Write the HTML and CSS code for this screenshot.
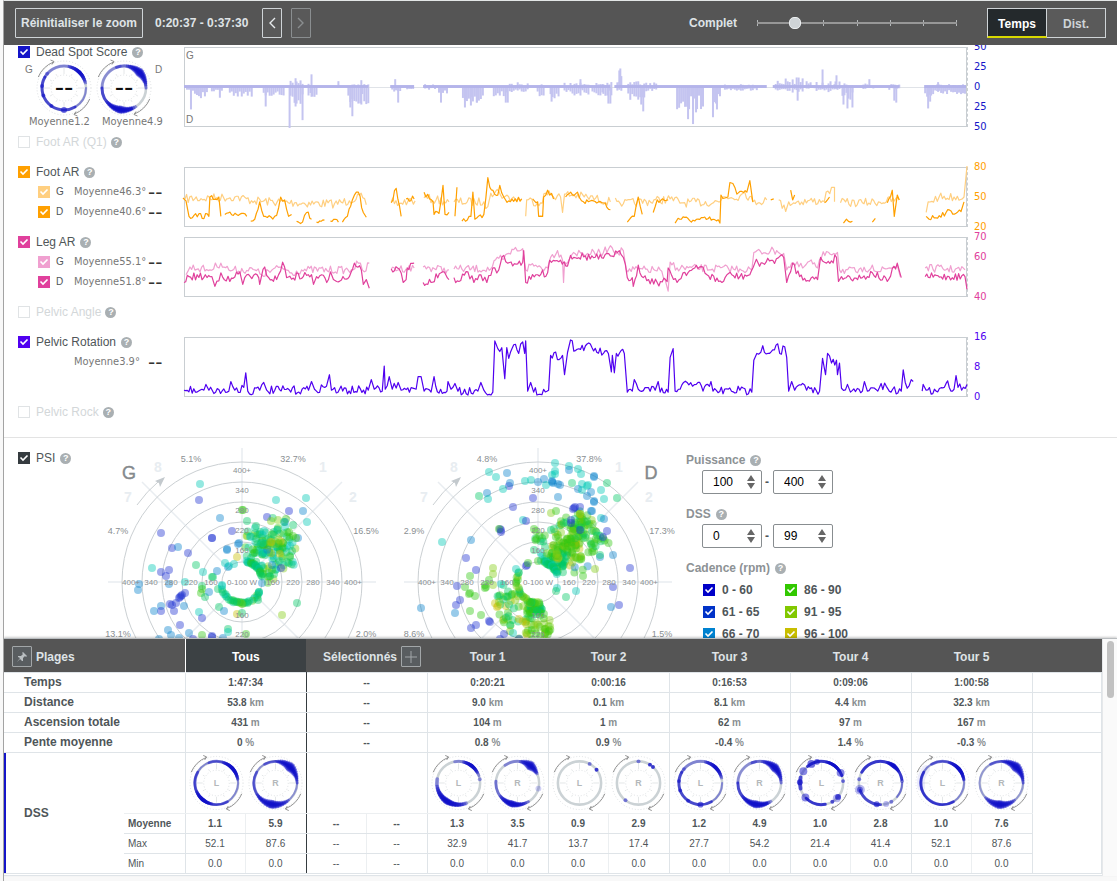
FILE: index.html
```html
<!DOCTYPE html>
<html lang="fr">
<head>
  <meta charset="UTF-8" />
  <meta name="viewport" content="width=device-width, initial-scale=1" />
  <title>Analyse de l'activité</title>
  <link rel="stylesheet" href="styles.css">
</head>
<body>
  <div class="app">
    <header class="toolbar">
      <button type="button" class="btn reset">Réinitialiser le zoom</button>
      <span class="range-text">0:20:37 - 0:37:30</span>
      <button type="button" class="btn arrow" aria-label="Précédent">
        <svg width="8" height="12" viewBox="0 0 8 12"><path d="M7 1 L2 6 L7 11" /></svg>
      </button>
      <button type="button" class="btn arrow next" aria-label="Suivant" disabled>
        <svg width="8" height="12" viewBox="0 0 8 12"><path d="M1 1 L6 6 L1 11" /></svg>
      </button>
      <label class="zoom-label" for="zoom">Complet</label>
      <input class="zoom" type="range" id="zoom" min="0" max="100" value="17" />
      <div class="segmented">
        <button type="button" class="segment active">Temps</button>
        <button type="button" class="segment">Dist.</button>
      </div>
    </header>

    <main class="content">
      <section class="metrics">
        <div class="metric dss">
          <div class="legend">
            <div class="title">
              <input type="checkbox" class="check blue" id="mDss" checked />
              <label for="mDss">Dead Spot Score</label><span class="help">?</span>
            </div>
            <div class="wheels">
              <span class="side">G</span>
              <svg class="wheel" data-wheel="t3l" data-label="--"></svg>
              <svg class="wheel" data-wheel="t3r" data-label="--"></svg>
              <span class="side">D</span>
            </div>
            <div class="wheel-avg"><span>Moyenne<b>1.2</b></span><span>Moyenne<b>4.9</b></span></div>
          </div>
          <div class="plot">
            <svg id="dssChart" viewBox="0 0 784 80" preserveAspectRatio="none"></svg>
            <span class="plot-side top">G</span>
            <span class="plot-side bottom">D</span>
          </div>
          <div class="axis blue-text"><span>50</span><span>25</span><span>0</span><span>25</span><span>50</span></div>
        </div>

        <div class="metric off">
          <div class="title">
            <input type="checkbox" class="check" id="mFootQ1" />
            <label for="mFootQ1">Foot AR (Q1)</label><span class="help">?</span>
          </div>
        </div>

        <div class="metric">
          <div class="legend">
            <div class="title">
              <input type="checkbox" class="check orange" id="mFoot" checked />
              <label for="mFoot">Foot AR</label><span class="help">?</span>
            </div>
            <div class="sub">
              <input type="checkbox" class="check orange-light" id="mFootG" checked />
              <label for="mFootG">G</label><span class="avg">Moyenne<b>46.3°</b></span><span class="dash">--</span>
            </div>
            <div class="sub">
              <input type="checkbox" class="check orange" id="mFootD" checked />
              <label for="mFootD">D</label><span class="avg">Moyenne<b>40.6°</b></span><span class="dash">--</span>
            </div>
          </div>
          <div class="plot"><svg id="footChart" viewBox="0 0 784 60" preserveAspectRatio="none"></svg></div>
          <div class="axis orange-text"><span>80</span><span>50</span><span>20</span></div>
        </div>

        <div class="metric">
          <div class="legend">
            <div class="title">
              <input type="checkbox" class="check pink" id="mLeg" checked />
              <label for="mLeg">Leg AR</label><span class="help">?</span>
            </div>
            <div class="sub">
              <input type="checkbox" class="check pink-light" id="mLegG" checked />
              <label for="mLegG">G</label><span class="avg">Moyenne<b>55.1°</b></span><span class="dash">--</span>
            </div>
            <div class="sub">
              <input type="checkbox" class="check pink" id="mLegD" checked />
              <label for="mLegD">D</label><span class="avg">Moyenne<b>51.8°</b></span><span class="dash">--</span>
            </div>
          </div>
          <div class="plot"><svg id="legChart" viewBox="0 0 784 60" preserveAspectRatio="none"></svg></div>
          <div class="axis pink-text"><span>70</span><span>60</span><span></span><span>40</span></div>
        </div>

        <div class="metric off">
          <div class="title">
            <input type="checkbox" class="check" id="mAngle" />
            <label for="mAngle">Pelvic Angle</label><span class="help">?</span>
          </div>
        </div>

        <div class="metric">
          <div class="legend">
            <div class="title">
              <input type="checkbox" class="check violet" id="mRotation" checked />
              <label for="mRotation">Pelvic Rotation</label><span class="help">?</span>
            </div>
            <div class="sub">
              <span></span><span></span><span class="avg">Moyenne<b>3.9°</b></span><span class="dash">--</span>
            </div>
          </div>
          <div class="plot"><svg id="rotationChart" viewBox="0 0 784 60" preserveAspectRatio="none"></svg></div>
          <div class="axis violet-text"><span>16</span><span>8</span><span>0</span></div>
        </div>

        <div class="metric off">
          <div class="title">
            <input type="checkbox" class="check" id="mRock" />
            <label for="mRock">Pelvic Rock</label><span class="help">?</span>
          </div>
        </div>
      </section>

      <section class="psi">
        <div class="title">
          <input type="checkbox" class="check dark" id="mPsi" checked />
          <label for="mPsi">PSI</label><span class="help">?</span>
        </div>
        <svg class="polar" id="psiLeft" viewBox="-148 -144 296 296"></svg>
        <svg class="polar" id="psiRight" viewBox="-148 -144 296 296"></svg>
        <div class="filters">
          <h3>Puissance <span class="help">?</span></h3>
          <div class="pair">
            <input type="number" aria-label="Puissance min" value="100" /><span>-</span><input type="number" aria-label="Puissance max" value="400" />
          </div>
          <h3>DSS <span class="help">?</span></h3>
          <div class="pair">
            <input type="number" aria-label="DSS min" value="0" /><span>-</span><input type="number" aria-label="DSS max" value="99" />
          </div>
          <h3>Cadence (rpm) <span class="help">?</span></h3>
          <div class="cadence">
            <label><input type="checkbox" class="check c60" checked />0 - 60</label>
            <label><input type="checkbox" class="check c90" checked />86 - 90</label>
            <label><input type="checkbox" class="check c65" checked />61 - 65</label>
            <label><input type="checkbox" class="check c95" checked />91 - 95</label>
            <label><input type="checkbox" class="check c70" checked />66 - 70</label>
            <label><input type="checkbox" class="check c100" checked />96 - 100</label>
          </div>
        </div>
      </section>
    </main>

    <section class="ranges">
      <table>
        <colgroup>
          <col class="col-name"><col class="col-sub">
          <col class="a"><col class="b"><col class="a"><col class="b"><col class="a"><col class="b"><col class="a"><col class="b">
          <col class="a"><col class="b"><col class="a"><col class="b"><col class="a"><col class="b"><col>
        </colgroup>
        <thead>
          <tr>
            <th colspan="2" class="head-name">
              <div class="head-flex">
                <button type="button" class="pin" aria-label="Épingler">
                  <svg width="12" height="12" viewBox="0 0 12 12"><path d="M7 1 L11 5 L10 6 L9 5 L7 7 L7 10 L6 10 L4 8 L1 11 L4 7 L2 6 L2 5 L5 5 L7 3 L6 2 Z" /></svg>
                </button>
                <span>Plages</span>
              </div>
            </th>
            <th colspan="2" class="all">Tous</th>
            <th colspan="2">
              <div class="head-flex selected">
                <span>Sélectionnés</span>
                <button type="button" class="add" aria-label="Ajouter">
                  <svg width="12" height="12" viewBox="0 0 12 12"><path d="M6 0 V12 M0 6 H12" /></svg>
                </button>
              </div>
            </th>
            <th colspan="2">Tour 1</th>
            <th colspan="2">Tour 2</th>
            <th colspan="2">Tour 3</th>
            <th colspan="2">Tour 4</th>
            <th colspan="2">Tour 5</th>
            <th></th>
          </tr>
        </thead>
        <tbody>
          <tr>
            <th colspan="2">Temps</th>
            <td colspan="2" class="all">1:47:34</td><td colspan="2">--</td><td colspan="2">0:20:21</td><td colspan="2">0:00:16</td>
            <td colspan="2">0:16:53</td><td colspan="2">0:09:06</td><td colspan="2">1:00:58</td><td></td>
          </tr>
          <tr>
            <th colspan="2">Distance</th>
            <td colspan="2" class="all">53.8 <i>km</i></td><td colspan="2">--</td><td colspan="2">9.0 <i>km</i></td><td colspan="2">0.1 <i>km</i></td>
            <td colspan="2">8.1 <i>km</i></td><td colspan="2">4.4 <i>km</i></td><td colspan="2">32.3 <i>km</i></td><td></td>
          </tr>
          <tr>
            <th colspan="2">Ascension totale</th>
            <td colspan="2" class="all">431 <i>m</i></td><td colspan="2">--</td><td colspan="2">104 <i>m</i></td><td colspan="2">1 <i>m</i></td>
            <td colspan="2">62 <i>m</i></td><td colspan="2">97 <i>m</i></td><td colspan="2">167 <i>m</i></td><td></td>
          </tr>
          <tr>
            <th colspan="2">Pente moyenne</th>
            <td colspan="2" class="all">0 <i>%</i></td><td colspan="2">--</td><td colspan="2">0.8 <i>%</i></td><td colspan="2">0.9 <i>%</i></td>
            <td colspan="2">-0.4 <i>%</i></td><td colspan="2">1.4 <i>%</i></td><td colspan="2">-0.3 <i>%</i></td><td></td>
          </tr>
          <tr class="wheel-row">
            <th rowspan="4" class="dss-name">DSS</th>
            <td class="sub-name"></td>
            <td colspan="2" class="all"><div class="wheel-pair"><svg class="wheel" data-wheel="alll" data-label="L"></svg><svg class="wheel" data-wheel="allr" data-label="R"></svg></div></td>
            <td colspan="2"></td>
            <td colspan="2"><div class="wheel-pair"><svg class="wheel" data-wheel="t1l" data-label="L"></svg><svg class="wheel" data-wheel="t1r" data-label="R"></svg></div></td>
            <td colspan="2"><div class="wheel-pair"><svg class="wheel" data-wheel="t2l" data-label="L"></svg><svg class="wheel" data-wheel="t2r" data-label="R"></svg></div></td>
            <td colspan="2"><div class="wheel-pair"><svg class="wheel" data-wheel="t3l" data-label="L"></svg><svg class="wheel" data-wheel="t3r" data-label="R"></svg></div></td>
            <td colspan="2"><div class="wheel-pair"><svg class="wheel" data-wheel="t4l" data-label="L"></svg><svg class="wheel" data-wheel="t4r" data-label="R"></svg></div></td>
            <td colspan="2"><div class="wheel-pair"><svg class="wheel" data-wheel="t5l" data-label="L"></svg><svg class="wheel" data-wheel="t5r" data-label="R"></svg></div></td>
            <td rowspan="4"></td>
          </tr>
          <tr class="half">
            <th class="sub-name">Moyenne</th>
            <td class="all-left">1.1</td><td class="all-right">5.9</td><td>--</td><td>--</td><td>1.3</td><td>3.5</td><td>0.9</td><td>2.9</td>
            <td>1.2</td><td>4.9</td><td>1.0</td><td>2.8</td><td>1.0</td><td>7.6</td>
          </tr>
          <tr class="half light">
            <th class="sub-name">Max</th>
            <td class="all-left">52.1</td><td class="all-right">87.6</td><td>--</td><td>--</td><td>32.9</td><td>41.7</td><td>13.7</td><td>17.4</td>
            <td>27.7</td><td>54.2</td><td>21.4</td><td>41.4</td><td>52.1</td><td>87.6</td>
          </tr>
          <tr class="half light">
            <th class="sub-name">Min</th>
            <td class="all-left">0.0</td><td class="all-right">0.0</td><td>--</td><td>--</td><td>0.0</td><td>0.0</td><td>0.0</td><td>0.0</td>
            <td>0.0</td><td>0.0</td><td>0.0</td><td>0.0</td><td>0.0</td><td>0.0</td>
          </tr>
        </tbody>
      </table>
      <div class="scrollbar"><div class="thumb"></div></div>
    </section>
  </div>

  <script src="charts.js"></script>
</body>
</html>
```

FILE: styles.css
```css
* {
  box-sizing: border-box;
}
body {
  margin: 0;
  background: #f8f8f8;
  color: #4f5659;
  font: 12px/20px "Liberation Sans", Arial, sans-serif;
}
button, input {
  font-family: inherit;
  margin: 0;
}
svg {
  display: block;
}
.app {
  display: flex;
  flex-direction: column;
  height: 100vh;
  margin-left: 3px;
  padding-bottom: 5px;
  border-left: 1px solid #a3a3a3;
  border-top: 1px solid #e3e6e6;
  overflow: hidden;
}

/* toolbar */
.toolbar {
  display: flex;
  align-items: center;
  flex: none;
  height: 44px;
  padding: 0 11px;
  background: #555;
  color: #dfe3e6;
  font-weight: bold;
  position: relative;
  z-index: 1;
}
.btn {
  height: 30px;
  padding: 0;
  border: 1px solid #cfd4d7;
  border-radius: 1px;
  background: #595959;
  color: #dfe3e6;
  font-size: 12px;
  font-weight: bold;
}
.reset {
  width: 128px;
}
.range-text {
  margin: 0 14px 0 12px;
}
.arrow {
  display: flex;
  align-items: center;
  justify-content: center;
  width: 20px;
}
.arrow path {
  fill: none;
  stroke: #e6eaec;
  stroke-width: 1.4;
}
.next {
  margin-left: 9px;
  border-color: #8a8e90;
}
.next path {
  stroke: #8a8e90;
}
.zoom-label {
  margin-left: auto;
  margin-right: 20px;
}
.zoom {
  appearance: none;
  width: 200px;
  height: 20px;
  margin-right: 30px;
  background:
    linear-gradient(#979797, #979797) center / 100% 2px no-repeat,
    repeating-linear-gradient(90deg, #b4b8ba 0 1px, transparent 1px calc(199px / 6)) center / 100% 6px no-repeat;
}
.zoom::-webkit-slider-thumb {
  appearance: none;
  width: 12px;
  height: 12px;
  border-radius: 5px;
  border: 1px solid #eceff1;
  background: #cfd4d7;
}
.segmented {
  display: flex;
}
.segment {
  width: 59px;
  height: 30px;
  padding: 2px 0 0;
  border: 1px solid #cfd4d7;
  border-left: 0;
  background: #5a5a5a;
  color: #cfd4d7;
  font-size: 12px;
  font-weight: bold;
}
.segment.active {
  width: 60px;
  border-left: 1px solid #cfd4d7;
  border-bottom: 2px solid #d8d800;
  background: #24292c;
  color: #fff;
}

/* metric rows */
.content {
  flex: 1;
  min-height: 0;
  overflow: hidden;
  background: #fff;
}
.metrics {
  margin-top: -3px;
  padding-bottom: 5px;
  border-bottom: 1px solid #e3e3e3;
}
.metric {
  display: grid;
  grid-template-columns: 179px 1fr 149px;
  height: 70px;
}
.metric.dss {
  height: 90px;
}
.metric.off {
  height: 30px;
  color: #d3d7d9;
}
.title {
  display: flex;
  align-items: center;
  height: 20px;
  padding-left: 14px;
}
.title .check {
  margin-right: 6px;
}
.help {
  display: inline-flex;
  align-items: center;
  justify-content: center;
  width: 11px;
  height: 11px;
  margin-left: 5px;
  border-radius: 50%;
  background: #a9afb2;
  color: #fff;
  font-size: 9px;
  font-weight: bold;
  line-height: 11px;
}
.off .help {
  margin-left: 4px;
}
.check {
  appearance: none;
  flex: none;
  width: 12px;
  height: 12px;
  border: 1px solid #e0e3e5;
  background: #fff center no-repeat;
}
.check:checked {
  border: 0;
  background-image: url("data:image/svg+xml,%3Csvg xmlns='http://www.w3.org/2000/svg' width='12' height='12'%3E%3Cpath d='M2.5 5.5 L5 8 L9.5 3.5' fill='none' stroke='white' stroke-width='1.6'/%3E%3C/svg%3E");
}
.blue { background-color: #1414c8; }
.orange { background-color: #ffa000; }
.orange-light { background-color: #ffcf80; }
.pink { background-color: #e0409c; }
.pink-light { background-color: #f0a0d0; }
.violet { background-color: #5000f0; }
.dark { background-color: #353b3f; }
.c60 { background-color: #0000c8; }
.c65 { background-color: #0032c8; }
.c70 { background-color: #0082d0; }
.c90 { background-color: #32c800; }
.c95 { background-color: #82c800; }
.c100 { background-color: #c8be00; }

.sub {
  display: grid;
  grid-template-columns: 18px 18px 74px auto;
  align-items: center;
  height: 20px;
  padding-left: 34px;
  font-size: 10px;
}
.avg, .wheel-avg, .axis {
  font-family: "DejaVu Sans Condensed", "Noto Sans", sans-serif;
  font-size: 11px;
}
.avg, .wheel-avg {
  color: #777;
}
.avg b, .wheel-avg b {
  font-weight: normal;
}
.dash {
  color: #333;
  font: 20px/20px "DejaVu Sans", sans-serif;
}
.wheels {
  display: flex;
  height: 60px;
  margin-top: -4px;
  padding-left: 21px;
}
.side {
  width: 9px;
  padding-top: 2px;
  color: #777;
  font-size: 10px;
}
.wheels .side:last-child {
  margin-left: 1px;
}
.wheel-avg {
  display: flex;
  gap: 12px;
  margin-top: -4px;
  padding-left: 25px;
  line-height: 16px;
}
.wheel {
  width: 60px;
  height: 60px;
}
.plot {
  position: relative;
  height: 60px;
  margin-top: 5px;
  padding-left: 1px;
  border-right: 1px dashed #c9ced2;
}
.dss .plot {
  height: 80px;
}
.plot svg {
  width: 100%;
  height: 100%;
  border: 1px solid #c9ced2;
  overflow: visible;
}
.plot path {
  fill: none;
  stroke-width: 1.2;
  stroke-linejoin: round;
  vector-effect: non-scaling-stroke;
}
.plot-side {
  position: absolute;
  left: 3px;
  color: #777;
  font-size: 10px;
  line-height: 14px;
}
.plot-side.top {
  top: 2px;
}
.plot-side.bottom {
  bottom: 0;
}
.axis {
  display: flex;
  flex-direction: column;
  justify-content: space-between;
  height: 80px;
  margin-top: -5px;
  padding-left: 6px;
}
.dss .axis {
  height: 100px;
}
.axis span {
  height: 20px;
}
.blue-text { color: #1414c8; }
.orange-text { color: #ffa000; }
.pink-text { color: #e0409c; }
.violet-text { color: #5000f0; }

/* polar charts */
.psi {
  display: grid;
  grid-template-columns: 90px 296px 296px 1fr;
}
.psi > .title {
  margin-top: 10px;
}
.polar {
  width: 296px;
  height: 296px;
}
.polar text {
  text-anchor: middle;
  font-size: 8px;
  fill: #8a8f92;
}
.polar .percent {
  font-size: 9px;
}
.polar .sector {
  font-size: 14px;
  font-weight: bold;
  fill: #e8edf1;
}
.polar .big {
  font-size: 18px;
  fill: #84898c;
  stroke: #84898c;
  stroke-width: 0.4;
}
.filters {
  padding-top: 12px;
  font-weight: bold;
}
.filters h3 {
  display: flex;
  align-items: center;
  height: 20px;
  margin: 0;
  color: #8d9295;
  font-size: 12px;
}
.pair {
  display: flex;
  gap: 3px;
  height: 24px;
  margin: 0 0 10px 16px;
  line-height: 24px;
}
.pair span {
  width: 5px;
}
.pair input {
  appearance: textfield;
  width: 60px;
  height: 24px;
  padding: 0 0 0 10px;
  border: 1px solid #888d90;
  border-radius: 2px;
  background: #fff url("data:image/svg+xml,%3Csvg xmlns='http://www.w3.org/2000/svg' width='8' height='14'%3E%3Cpath d='M0 6 L4 0 L8 6 Z M0 8 L8 8 L4 14 Z' fill='%23666'/%3E%3C/svg%3E") right 6px center no-repeat;
  color: #000;
  font-size: 12px;
}
.pair input::-webkit-inner-spin-button {
  appearance: none;
}
.cadence {
  display: grid;
  grid-template-columns: 82px 100px;
  margin: 1px 0 0 17px;
}
.cadence label {
  display: flex;
  align-items: center;
  gap: 7px;
  height: 22px;
}

/* ranges table */
.ranges {
  display: flex;
  flex: none;
  position: relative;
  border-top: 1px solid #b9bdc0;
  box-shadow: 0 -1px 2px rgba(0, 0, 0, 0.2);
  background: #fafafa;
}
.ranges table {
  flex: 1;
  width: 100%;
  border-collapse: collapse;
  table-layout: fixed;
  background: #fff;
  border-bottom: 3px double #dfe4e8;
}
.col-name { width: 120px; }
.col-sub { width: 61px; }
.a { width: 60px; }
.b { width: 61px; }
.ranges thead th {
  height: 34px;
  padding-top: 3px;
  border: 0;
  background: #555;
  color: #dfe3e6;
  font-size: 12px;
  text-align: center;
}
.ranges thead .all {
  border-left: 1px solid #fff;
  background: #3c4144;
  color: #fff;
}
.head-flex {
  display: flex;
  align-items: center;
  gap: 4px;
  padding-left: 8px;
}
.head-flex.selected {
  padding-left: 17px;
}
.pin, .add {
  display: flex;
  align-items: center;
  justify-content: center;
  width: 20px;
  height: 21px;
  padding: 0;
  border: 1px solid #a2a6a8;
  border-radius: 1px;
  background: #595d60;
}
.pin path {
  fill: #b9bec1;
}
.add path {
  fill: none;
  stroke: #a2a6a8;
}
.ranges th, .ranges td {
  padding: 0;
}
.ranges tbody th, .ranges tbody td {
  height: 20px;
  border: 1px solid #dfe4e8;
  line-height: 19px;
}
.ranges tbody th {
  padding-left: 20px;
  border-left: 0;
  text-align: left;
}
.ranges td {
  font-size: 10px;
  font-weight: bold;
  text-align: center;
}
.ranges i {
  color: #8a8f92;
  font-style: normal;
}
.ranges tbody .all {
  border-left: 1px solid #353b3f;
  border-right: 1px solid #353b3f;
}
.ranges tbody .dss-name {
  border-right: 0;
  background: linear-gradient(#1414c8, #1414c8) left / 2px 100% no-repeat;
}
.ranges .wheel-row td {
  height: 61px;
  border-bottom-color: #eceff1;
}
.ranges tbody td.sub-name {
  border-left: 0;
}
.ranges tbody th.sub-name {
  padding-left: 4px;
  border-left: 0;
  font-size: 10px;
}
.half td:nth-child(even) {
  border-right-color: #eceff1;
}
.ranges .half .all-left {
  border-left: 1px solid #353b3f;
}
.ranges .half .all-right {
  border-right: 1px solid #353b3f;
}
.ranges .light td, .ranges .light th {
  font-weight: normal;
}
.wheel-pair {
  display: flex;
  justify-content: center;
}
.wheel-pair .wheel {
  width: 59px;
}
.scrollbar {
  width: 15px;
  padding: 2px 3px 0 4px;
  border-left: 1px solid #e6e8ea;
}
.thumb {
  height: 57px;
  border-radius: 4px;
  background: #c1c1c1;
}
```

FILE: charts.js
```js
const NS = 'http://www.w3.org/2000/svg';
let seed = 7;

function rand() {
  seed = (seed * 16807) % 2147483647;
  return seed / 2147483647;
}

function add(parent, name, attrs, text) {
  const el = document.createElementNS(NS, name);
  for (const key in attrs) el.setAttribute(key, attrs[key]);
  if (text) el.textContent = text;
  parent.appendChild(el);
  return el;
}

// "x,y x,y | x,y ..." : each | starts a new piece of the line
function line(id, color, noise, data) {
  let d = '';
  data.split('|').forEach(piece => {
    const pts = piece.trim().split(/\s+/).map(p => p.split(',').map(Number));
    d += `M${pts[0]}`;
    for (let i = 1; i < pts.length; i++) {
      const [x0, y0] = pts[i - 1];
      const [x1, y1] = pts[i];
      const n = Math.floor((x1 - x0) / 1.6);
      for (let k = 1; k < n; k++) {
        const y = y0 + (y1 - y0) * k / n + (rand() - 0.5) * noise;
        d += `L${(x0 + (x1 - x0) * k / n).toFixed(1)},${Math.min(y, 59).toFixed(1)}`;
      }
      d += `L${x1},${y1}`;
    }
  });
  add(document.getElementById(id), 'path', { d, stroke: color });
}

line('footChart', '#ffcf80', 9, `0,32 50,30 70,34 110,36 150,37 165,34 175,28 182,38 | 207,35 215,37 224,34 231,34 | 240,31 252,33 265,35 |
  270,35 300,35 304,40 307,26 315,24 320,30 338,32 | 342,50 343,33 357,36 362,26 377,30 379,46 381,27 404,30 427,35 |
  432,31 440,37 487,32 500,36 537,35 540,30 557,29 562,25 570,35 584,33 | 596,33 603,45 606,35 640,34 649,20 652,20 652,35 |
  658,36 680,36 717,33 | 744,46 746,35 757,30 782,30 785,-2`);
line('footChart', '#ffa000', 6, `-2,31 1,34 4,50 9,49 24,50 25,30 34,30 36,50 | 40,48 62,50 | 66,55 70,53 75,35 79,50 90,50 92,49 96,30 100,33 104,50 107,48 |
  112,55 118,56 122,46 127,53 | 132,56 140,54 | 146,55 154,56 | 158,56 163,50 168,33 174,25 179,46 182,51 | 207,36 212,21 217,50 | 222,32 230,32 |
  240,25 249,35 250,48 255,47 259,18 261,48 265,46 | 271,50 273,20 | 278,55 287,50 289,25 291,53 300,48 304,10 306,20 314,28 316,18 320,30 325,34 338,32 |
  349,32 354,35 355,50 359,50 360,30 364,23 370,32 | 382,30 394,25 400,35 410,34 420,36 427,43 | 444,56 447,52 451,50 455,30 459,48 | 470,46 474,33 485,33 |
  492,57 495,52 510,54 530,53 537,57 538,28 542,31 545,30 547,15 550,16 554,27 564,25 567,13 570,35 | 588,33 591,32 | 608,23 610,33 612,28 |
  642,36 647,30 | 661,57 664,53 670,55 | 690,56 693,52 | 705,36 710,23 712,50 715,28 717,33 | 744,50 747,53 764,46 779,45 782,35`);
line('legChart', '#f0a0d0', 8, `1,38 5,30 25,33 36,26 44,33 70,33 77,38 97,30 107,36 117,33 167,33 174,26 180,35 185,26 | 207,32 230,31 | 239,30 265,33 |
  270,32 307,32 315,21 320,22 330,12 339,11 342,33 347,28 364,31 367,20 374,13 379,23 380,46 381,25 390,15 404,16 420,15 427,8 434,15 440,13 443,33 477,33
  485,55 487,25 494,31 557,32 569,33 571,15 594,13 601,16 604,33 609,26 620,31 627,24 635,31 639,20 644,14 655,15 657,33 680,35 690,28 695,35 715,28 718,40 | 743,31 783,33`);
line('legChart', '#e0409c', 8, `-1,46 4,40 27,40 30,50 36,36 45,45 55,35 58,48 62,38 74,41 75,48 80,30 84,41 92,43 98,25 102,41 127,38 129,48 132,40 144,43 146,35 149,43 165,40
  170,26 177,33 179,48 182,43 185,52 | 207,32 215,32 219,46 222,43 223,31 230,26 | 239,46 247,46 257,36 265,43 | 270,41 275,45 284,35 290,46 297,38 303,46 309,31 315,33
  320,18 324,26 339,25 340,13 342,46 354,38 364,36 366,23 377,23 384,29 387,18 420,21 434,15 440,20 444,41 449,41 450,50 455,28 460,41 474,46 484,45 485,31 494,46 500,36
  520,30 524,38 539,46 544,38 557,40 567,38 572,26 580,26 590,23 601,20 604,46 610,26 617,40 635,43 638,20 644,26 654,20 656,45 659,40 680,41 690,36 705,45 715,26 719,41 |
  743,40 783,40 785,53`);
line('rotationChart', '#5000f0', 9, `-1,54 17,53 21,48 24,54 44,55 46,45 50,54 59,51 61,36 63,55 75,54 79,46 82,54 124,54 127,45 130,53 142,50 145,38 147,54 184,54 187,43 190,53
  198,55 200,29 201,53 205,40 208,53 214,46 217,54 232,53 234,40 237,40 240,55 247,56 250,40 255,57 263,55 264,45 267,53 271,47 274,55 294,55 297,46 300,54 309,56 311,3
  314,11 318,10 321,42 323,10 325,21 330,7 335,16 339,4 341,16 342,3 344,55 347,46 350,56 365,54 367,18 379,18 381,38 384,15 387,2 392,13 402,8 420,16 425,16 428,35 429,18
  431,36 433,16 441,16 444,56 449,55 451,43 455,53 472,54 475,45 477,56 485,56 487,20 490,11 492,55 497,53 504,46 515,46 520,55 528,45 530,55 557,54 569,56 571,23 574,16
  580,8 585,16 595,6 597,16 602,9 604,20 606,55 609,45 612,54 620,47 624,54 637,55 640,21 643,38 645,16 649,26 654,23 655,38 657,26 659,52 665,48 668,56 680,55 682,45
  685,55 704,50 707,55 719,55 721,33 723,46 725,52 729,43 731,45 | 740,55 741,48 744,54 754,55 764,47 772,53 774,39 776,51 785,48`);

// dead spot bars: [from, to, up, down] fills a stretch, [x, up, down] is a single spike
const bars = document.getElementById('dssChart');
const base = 40;
function bar(x, up, down) {
  add(bars, 'rect', { x, y: base - up, width: 2, height: up + down, fill: '#c4c4f0' });
}
[[1, 8, 2, 5], [9, 22, 1, 14], [26, 37, 1, 5], [44, 68, 2, 10], [78, 100, 2, 10], [105, 119, 8, 18], [123, 132, 4, 11], [163, 184, 3, 18],
 [207, 216, 1, 6], [222, 230, 1, 3], [240, 252, 3, 3], [254, 264, 1, 8], [278, 300, 1, 16], [309, 322, 1, 10], [325, 344, 5, 6], [353, 361, 4, 10],
 [366, 376, 1, 12], [380, 405, 5, 9], [408, 419, 11, 10], [419, 428, 6, 10], [433, 438, 12, 6], [444, 462, 6, 14], [462, 474, 6, 5],
 [493, 521, 1, 24], [530, 538, 1, 20], [541, 575, 3, 4], [592, 607, 10, 4], [609, 620, 11, 6], [623, 632, 6, 2], [633, 652, 6, 6],
 [652, 658, 12, 4], [659, 670, 4, 14], [680, 692, 4, 2], [706, 717, 3, 3], [742, 750, 2, 16], [750, 783, 3, 8]
].forEach(([a, b, up, down]) => {
  for (let x = a; x < b; x += 2) bar(x, up * rand(), down * (0.35 + rand() * 0.65));
});
[[5, 0, 23], [34, 0, 11], [80, 0, 20], [104, 0, 42], [117, 0, 34], [110, 9, 20], [126, 13, 10], [165, 0, 21], [167, 0, 30], [153, 6, 1], [176, 7, 18],
 [210, 8, 3], [213, 1, 16], [256, 0, 16], [280, 0, 21], [286, 0, 19], [292, 0, 16], [321, 0, 16], [323, 0, 16], [367, 0, 15], [396, 8, 2], [424, 0, 17],
 [426, 0, 17], [435, 17, 1], [436, 19, 1], [457, 0, 18], [459, 0, 25], [504, 0, 33], [509, 0, 38], [512, 0, 26], [529, 0, 31], [533, 0, 23],
 [614, 0, 14], [639, 18, 2], [653, 12, 2], [664, 0, 22], [669, 0, 21], [660, 0, 18], [686, 8, 1], [711, 0, 14], [713, 0, 16], [745, 0, 22],
 [747, 0, 15], [755, 5, 5]
].forEach(s => bar(...s));
add(bars, 'rect', { x: 0, y: base, width: 784, height: 1, fill: '#c9ced8', opacity: 0.6 });
[[-1, 184], [206, 230], [239, 427], [431, 584], [590, 717], [742, 784]].forEach(([a, b]) => {
  add(bars, 'rect', { x: a, y: base - 2, width: b - a, height: 3, fill: '#b4b4ea' });
});

// dead spot wheels, angles in degrees clockwise from the top
function polar(r, a) {
  const t = (a - 90) * Math.PI / 180;
  return [(r * Math.cos(t)).toFixed(2), (r * Math.sin(t)).toFixed(2)];
}
function arc(r, a0, a1) {
  return `M${polar(r, a0)}A${r},${r} 0 ${a1 - a0 > 180 ? 1 : 0} 1 ${polar(r, a1)}`;
}
// arcs: [from, to, width, opacity]; bulges: [from, to, width]; dots: [angle, radius, opacity]
const wheels = {
  alll: { arcs: [[0, 359, 2, 0.4], [340, 440, 3, 0.5], [150, 300, 3, 0.6]], bulges: [[15, 80, 4], [190, 250, 4]] },
  allr: { arcs: [[0, 359, 2, 0.35], [220, 300, 3, 0.5], [330, 450, 3, 0.5]], bulges: [[0, 85, 10], [140, 240, 9]] },
  t1l: { arcs: [[350, 430, 3, 0.4], [160, 280, 4, 0.4]], bulges: [[10, 65, 4], [160, 265, 7]], dots: [[80, 2, 0.4]] },
  t1r: { arcs: [[325, 420, 3, 0.4], [150, 275, 3, 0.5]], bulges: [[5, 68, 10], [155, 235, 7]], dots: [[105, 3, 0.2]] },
  t2l: { dots: [[28, 2, 0.5], [52, 2, 0.8]] },
  t2r: { dots: [[0, 2, 0.5], [32, 2, 0.8], [42, 2, 0.8], [217, 2, 0.5]] },
  t3l: { arcs: [[150, 300, 3, 0.7], [300, 380, 3, 0.4], [90, 150, 2, 0.4]], bulges: [[10, 80, 4]], dots: [[275, 2, 0.6], [250, 2, 0.6], [215, 2, 0.6], [180, 3, 0.6], [310, 2, 0.4]] },
  t3r: { arcs: [[340, 450, 3, 0.5], [160, 270, 3, 0.7], [270, 350, 3, 0.35]], bulges: [[5, 85, 9], [145, 235, 8]] },
  t4l: { arcs: [[320, 430, 3, 0.8], [170, 225, 3, 0.8], [255, 285, 4, 0.7]], bulges: [[10, 60, 3]], dots: [[62, 4, 0.5], [130, 3, 0.7], [135, 4, 0.3], [228, 4, 0.5], [272, 3, 0.7], [303, 4, 0.5], [332, 4, 0.6], [348, 3, 0.6], [85, 2, 0.6], [150, 2, 0.7]] },
  t4r: { arcs: [[300, 440, 3, 0.8], [180, 250, 3, 0.7], [90, 130, 2, 0.5]], bulges: [[15, 60, 5]], dots: [[252, 5, 0.3], [252, 3, 0.5], [190, 3, 0.6], [165, 3, 0.3], [150, 2, 0.5], [85, 2, 0.5], [280, 2, 0.5]] },
  t5l: { arcs: [[0, 359, 2, 0.4], [150, 300, 3, 0.7], [330, 440, 3, 0.5], [260, 310, 8, 0.08]], bulges: [[15, 85, 4]] },
  t5r: { arcs: [[0, 359, 2, 0.3], [330, 450, 3, 0.5]], bulges: [[0, 85, 10], [140, 230, 9]] }
};
document.querySelectorAll('.wheel').forEach(svg => {
  const w = wheels[svg.dataset.wheel];
  svg.setAttribute('viewBox', '-30 -30 60 60');
  [27, 13].forEach(r => add(svg, 'circle', { r, fill: 'none', stroke: '#cfd3d6', 'stroke-dasharray': '1 2', 'stroke-width': 0.7 }));
  for (let a = 0; a < 360; a += 30) {
    add(svg, 'path', { d: `M${polar(14, a)}L${polar(a % 90 ? 16 : 20, a)}`, stroke: '#dde0e2', 'stroke-width': 0.8 });
  }
  add(svg, 'circle', { r: 22, fill: 'none', stroke: '#cbd2d5', 'stroke-width': 2.6 });
  const blue = add(svg, 'g', { fill: 'none', stroke: '#1010c8' });
  blue.style.filter = 'blur(0.7px)';
  (w.arcs || []).forEach(([a0, a1, width, o]) => add(blue, 'path', { d: arc(22, a0, a1), 'stroke-width': width, opacity: o, 'stroke-linecap': 'round' }));
  // nested arcs, shorter and wider towards the middle
  (w.bulges || []).forEach(([a0, a1, width]) => {
    for (let k = 0; k < 8; k++) {
      const cut = (a1 - a0) * 0.44 * k / 7;
      const sw = 3 + (width - 3) * k / 7;
      add(blue, 'path', { d: arc(22, a0 + cut, a1 - cut), 'stroke-width': sw, opacity: 0.4 });
    }
  });
  (w.dots || []).forEach(([a, r, o]) => {
    const [cx, cy] = polar(22, a);
    add(blue, 'circle', { cx, cy, r, fill: '#1010c8', stroke: 'none', opacity: o });
  });
  [0, 180].forEach(turn => {
    const g = add(svg, 'g', { transform: `rotate(${turn})`, fill: 'none', stroke: '#777', 'stroke-width': 0.8 });
    add(g, 'path', { d: arc(28, 293, 338) });
    add(g, 'path', { d: 'M-13.5,-28 L-10,-26.5 L-12,-23.5' });
  });
  const dashes = svg.dataset.label === '--';
  add(svg, 'text', {
    y: dashes ? 8 : 3, 'text-anchor': 'middle', 'font-size': dashes ? 26 : 9,
    'font-family': dashes ? 'DejaVu Sans' : 'Liberation Sans', fill: dashes ? '#111' : '#b4b8ba'
  }, svg.dataset.label);
});

// PSI polar charts
const colors = { b: '#1e32d2', s: '#0a82cd', t: '#00c8b4', m: '#00c864', g: '#32c814', l: '#82cd14', y: '#c8be00' };

function psi(id, side, sideX, percents, dots, clusters, rings) {
  const svg = document.getElementById(id);
  const grid = add(svg, 'g', { fill: 'none', stroke: '#e9edf1', 'stroke-width': 1.5 });
  add(grid, 'path', { d: 'M0,-134V140M-134,0H134M-100,-100L100,100M100,-100L-100,100' });
  [20, 40, 60, 80, 100, 120].forEach(r => add(svg, 'circle', { r, fill: r === 20 ? '#fff' : 'none', stroke: '#cbd0d3' }));
  add(svg, 'path', { d: 'M-105,-77Q-95,-91 -84,-100', fill: 'none', stroke: '#cbd0d3' });
  add(svg, 'path', { d: 'M-77,-105L-87,-101L-83,-99L-82,-95Z', fill: '#c3c9cd' });

  const layer = add(svg, 'g', {});
  const dot = (cx, cy, c) => add(layer, 'circle', { cx, cy, r: 4, fill: colors[c], 'fill-opacity': 0.42 });
  clusters.forEach(([cx, cy, spread, n, mix]) => {
    for (let i = 0; i < n; i++) {
      const x = cx + (rand() + rand() + rand() - 1.5) * spread;
      const y = cy + (rand() + rand() + rand() - 1.5) * spread;
      if (Math.hypot(x, y) > 20) dot(x.toFixed(1), y.toFixed(1), mix[Math.floor(rand() * mix.length)]);
    }
  });
  rings.forEach(([a0, a1, n, mix]) => {
    for (let i = 0; i < n; i++) {
      const [x, y] = polar(20 + rand() * 2, a0 + (a1 - a0) * (i + rand()) / n);
      dot(x, y, mix[Math.floor(rand() * mix.length)]);
    }
  });
  dots.trim().split(/\s+/).forEach(p => {
    const [c, x, y] = p.split(',');
    dot(x, y, c);
  });

  ['400+', '340', '280', '220', '160'].forEach((t, i) => {
    const r = 111 - i * 20;
    add(svg, 'text', { x: -r, y: 3 }, t);
    add(svg, 'text', { x: r, y: 3 }, t);
    add(svg, 'text', { y: -r + 2 }, t);
  });
  add(svg, 'text', { y: 36 }, '160');
  add(svg, 'text', { y: 55 }, '220');
  [['8', -84, -110], ['7', -114, -80], ['1', 81, -110], ['2', 111, -80]].forEach(([t, x, y]) => add(svg, 'text', { x, y, class: 'sector' }, t));
  [[-51, -120], [51, -120], [124, -48], [124, 55], [-124, 55], [-124, -48]].forEach(([x, y], i) => add(svg, 'text', { x, y, class: 'percent' }, percents[i]));
  add(svg, 'text', { x: sideX, y: -103, class: 'big' }, side);
  add(svg, 'text', { y: 3 }, '0-100 W');
}

psi('psiLeft', 'G', -113, ['5.1%', '32.7%', '16.5%', '2.0%', '13.1%', '4.7%'], `
  t,-42,-98 b,-43,-82 s,-22,-64 b,-81,-49 b,-30,-44 b,-30,-44 b,-10,-51 b,-70,-34 s,-64,-35 b,-54,-29 s,-15,-33 s,-15,-32 y,-5,-25 m,-46,-17
  b,-73,-12 b,-81,-10 b,-76,-6 t,-90,-14 s,-103,2 s,-104,8 s,-73,2 t,-57,0 t,-39,-10 m,-30,-5 m,-29,-5 s,-25,-11 s,-14,-15 t,-13,-16 t,-17,-19 t,-8,-18
  m,-40,4 g,-40,7 g,-41,11 m,-37,15 s,-33,10 m,-24,7 t,-20,3 t,-20,4 b,-61,14 b,-60,13 b,-62,15 b,-57,11 b,-63,16 b,-66,21 b,-72,22 b,-70,23 b,-68,29
  s,-81,24 b,-81,29 s,-88,29 s,-58,24 t,-43,30 b,-40,36 b,-62,43 s,-74,48 s,-71,53 s,-53,51 s,-63,56 s,-83,57 b,-49,57 g,-40,53 b,-30,54 b,-30,55
  m,-23,25 s,-18,29 m,-14,47 t,-14,50 y,-5,32 g,4,52 m,0,31 s,-19,56 l,40,33 m,55,21 t,17,10 m,17,10 m,16,18 s,20,1 t,34,-82 t,64,-84 b,47,-71
  s,61,-71 t,65,-60 b,25,-65 l,29,-61 l,36,-62 m,5,-61 g,0,-72 g,1,-72 g,44,-63 s,43,-60 m,42,-60 m,51,-57 s,56,-44 g,51,-46 g,54,-44 s,-4,-38 s,-3,-39
  t,13,-54 m,14,-56 t,22,-51 t,48,-36 m,50,-31 g,47,-50 g,48,-25 m,45,-20 b,39,-14 s,30,-17 m,28,-6`,
  [[30, -36, 26, 80, 'ggmmtlmgt'], [12, -27, 14, 24, 'mmtgt'], [30, -34, 12, 16, 'lyggst'], [28, -8, 9, 10, 'mtg']],
  [[10, 75, 22, 'mmtgm'], [120, 250, 26, 'mgtmg'], [170, 205, 5, 'mgl']]);

psi('psiRight', 'D', 113, ['4.8%', '37.8%', '17.3%', '1.5%', '8.6%', '2.9%'], `
  t,17,-119 t,31,-116 t,40,-113 s,31,-112 t,-49,-110 s,-31,-109 t,-42,-105 s,56,-105 s,56,-106 t,43,-108 t,17,-111 t,17,-108 t,14,-107 t,-13,-101 t,-7,-102
  s,0,-100 s,6,-103 s,14,-100 s,14,-101 s,15,-99 s,22,-97 s,20,-98 t,8,-97 m,34,-99 m,69,-99 t,44,-98 t,49,-96 t,50,-97 s,40,-93 t,44,-92 t,63,-92
  s,53,-90 s,49,-86 m,79,-84 t,66,-83 s,56,-80 s,56,-81 s,20,-85 b,-5,-84 b,-29,-96 s,-28,-99 t,-35,-93 m,-59,-86 s,-51,-89 t,-50,-83 b,-25,-75
  l,13,-69 g,18,-71 b,37,-75 b,36,-74 b,42,-75 b,35,-73 y,42,-68 l,42,-68 s,54,-71 s,53,-71 t,63,-64 s,66,-63 b,69,-51 b,65,-45 b,33,-62 t,-15,-62 b,-12,-61
  b,-37,-52 b,-38,-53 g,-39,-53 b,-37,-50 t,-96,-40 s,-67,-42 b,-72,-24 b,-62,-12 l,-45,-14 l,-45,-8 g,-68,-6 b,-81,4 g,-73,5 g,-69,12 g,-68,11 g,-63,14
  b,-78,18 b,-82,23 s,-83,31 s,-117,26 g,-68,29 g,-57,33 b,-62,43 b,-67,46 b,-49,39 b,-48,40 b,-34,52 b,-38,57 b,-19,57 t,-25,51 b,92,-14 s,75,-27
  b,75,5 b,81,23 s,73,25 l,57,-13 t,38,9 m,28,15 g,45,-6 t,19,6 m,18,9 t,-37,2 b,-12,-16 b,-11,-17 t,-22,-13 g,0,-21 g,-10,-19 g,-4,-53 g,-2,-51 m,-4,-32
  m,13,-52 l,-45,3 g,-52,5 g,-53,3 g,-53,6 g,-49,-2 s,62,-25 m,62,-27 y,-40,24 y,-41,25 l,-39,20 b,42,-52 b,33,-59`,
  [[16, -22, 13, 50, 'mmgmt'], [28, -36, 20, 80, 'gggmlly'], [43, -54, 14, 46, 'gglmgg'], [32, -58, 8, 8, 'gml'], [57, -40, 10, 16, 'gmg'], [38, -18, 9, 8, 'gls'],
   [-3, 27, 10, 44, 'mgmg'], [-25, 30, 18, 28, 'gmlgy'], [-6, 47, 14, 24, 'ggly'], [-34, 11, 10, 10, 'gm'], [8, 46, 8, 10, 'gl'], [3, -44, 7, 8, 'gm']],
  [[15, 70, 16, 'mmt'], [175, 300, 24, 'gggml']]);
```
